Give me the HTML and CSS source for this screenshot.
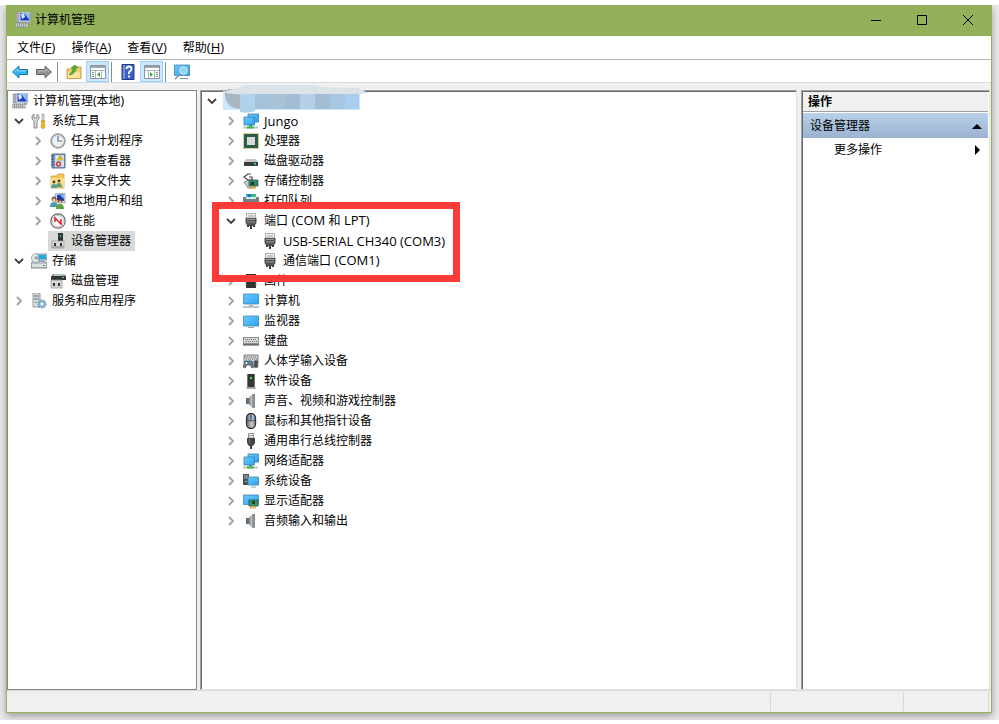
FILE: index.html
```html
<!DOCTYPE html>
<html lang="zh-CN">
<head>
<meta charset="utf-8">
<title>计算机管理</title>
<link rel="stylesheet" href="styles.css">
</head>
<body>
<svg class="sprite" aria-hidden="true">
  <defs>
    <linearGradient id="screen" x1="0" y1="0" x2="1" y2="1"><stop offset="0" stop-color="#6cc8ff"/><stop offset="1" stop-color="#2aa4f6"/></linearGradient>
    <linearGradient id="metal" x1="0" y1="0" x2="1" y2="0"><stop offset="0" stop-color="#666"/><stop offset=".6" stop-color="#c9cdd1"/><stop offset="1" stop-color="#808488"/></linearGradient>
  </defs>
  <symbol id="i-open" viewBox="0 0 10 10"><path d="M1 3l4 4 4-4" fill="none" stroke="#404040" stroke-width="1.8"/></symbol>
  <symbol id="i-closed" viewBox="0 0 10 10"><path d="M3 1l4 4-4 4" fill="none" stroke="#a0a0a0" stroke-width="1.8"/></symbol>
  <symbol id="i-mgmt" viewBox="0 0 16 16"><path d="M1 1h3v9H1z" fill="#aab2b8" stroke="#8b949a" stroke-width=".6"/><path d="M4 0h11.500v10H4z" fill="#d3dae2" stroke="#8f99a3" stroke-width=".6"/><path d="M5.500 1h9v7.500h-9z" fill="#1c3cc4"/><path d="M9 1h5.500v7z" fill="#8fc0ff"/><path d="M6 2l3-1 1 4-3 2z" fill="#dbe9fb"/><path d="M1 11h11l2 4H0z" fill="#c9ced2" stroke="#8a9196" stroke-width=".6"/><path d="M2 12h10M2 14h10" stroke="#666" stroke-dasharray="1 1"/><path d="M12 10h3v2h-3z" fill="#9aa4aa"/></symbol>
  <symbol id="i-tools" viewBox="0 0 16 16"><path d="M3 1L1 3v3l2 2v7h3V8l2-2V3L6 1v4H3z" fill="#d5d9dc" stroke="#747b80" stroke-width=".8"/><path d="M11 1h2v7h-2z" fill="#eee" stroke="#777" stroke-width=".6"/><path d="M10 8h4l-1 2 1 4-2 2-2-2 1-4z" fill="#f8b81b" stroke="#bf7c05" stroke-width=".6"/></symbol>
  <symbol id="i-clock" viewBox="0 0 16 16"><circle cx="8" cy="8" r="7.200" fill="#b5b5b5" stroke="#777" stroke-width=".8"/><circle cx="8" cy="8" r="5.500" fill="#eaf3f8" stroke="#ddd"/><path d="M8 3v5h4" fill="none" stroke="#5575a0" stroke-width="1.200"/><path d="M8 8l3 .5" stroke="#e39d35"/></symbol>
  <symbol id="i-event" viewBox="0 0 16 16"><path d="M2 1h13v14H2z" fill="#7d94bd" stroke="#5a719c"/><path d="M5 2h9v12H5z" fill="#c8daf0"/><path d="M6 4h3M6 6h3M12 11h2" stroke="#fff"/><path d="M1 3h3M1 6h3M1 9h3M1 12h3" stroke="#38507c"/><path d="M10 2l3 5H7z" fill="#ffda27" stroke="#be9200" stroke-width=".5"/><path d="M10 4v2" stroke="#444" stroke-width=".7"/><circle cx="8.500" cy="11" r="2.700" fill="#dd3f36"/><circle cx="8.500" cy="11" r="1" fill="#fff"/></symbol>
  <symbol id="i-share" viewBox="0 0 16 16"><path d="M1 3h6l1-2h6v14H1z" fill="#f4c95a" stroke="#c79a31" stroke-width=".7"/><path d="M1 5h13v9H1z" fill="#fbdf8b"/><circle cx="4" cy="9" r="1.400" fill="#4c4036"/><circle cx="9" cy="8" r="1.400" fill="#4c4036"/><path d="M1 15q0-4 3-4t3 4z" fill="#55a5a2"/><path d="M6 14q0-4 3-4t3 4z" fill="#609b80"/></symbol>
  <symbol id="i-users" viewBox="0 0 16 16"><path d="M5 1l10-1v10l-9-1z" fill="#dce4ed" stroke="#68778c" stroke-width=".6"/><path d="M7 2l7-1v7l-7-1z" fill="#1839bf"/><path d="M10 2l4-1v5z" fill="#83b9fa"/><circle cx="4" cy="6" r="2.500" fill="#8c5d2e"/><circle cx="4" cy="7" r="1.500" fill="#f5c99a"/><path d="M0 14q0-5 4-5t4 5z" fill="#4c99b4"/><circle cx="10" cy="8" r="2.400" fill="#5e3c23"/><circle cx="10" cy="9" r="1.500" fill="#f0bd8c"/><path d="M6 16q0-5 4-5t4 5z" fill="#5aa53d"/></symbol>
  <symbol id="i-perf" viewBox="0 0 16 16"><circle cx="8" cy="8" r="7.200" fill="#fff" stroke="#666" stroke-width="1.200"/><circle cx="8" cy="8" r="5.500" fill="none" stroke="#999" stroke-width=".6"/><path d="M5 9V5l6 6V6" fill="none" stroke="#dc1820" stroke-width="1.500"/></symbol>
  <symbol id="i-device" viewBox="0 0 16 16"><path d="M8 0h5v8H8z" fill="#303532"/><path d="M10 2h1v2h-1z" fill="#39e65b"/><path d="M2 8h12v7H2z" fill="#d7d8da" stroke="#939598" stroke-width=".7"/><path d="M1 13h13v2H1z" fill="#aaa"/><path d="M4 10h2v3H4zM10 10h2v3h-2z" fill="#333"/></symbol>
  <symbol id="i-storage" viewBox="0 0 16 16"><path d="M0 10l3-2h10l3 2v5H0z" fill="#b9bfc4" stroke="#666d72" stroke-width=".7"/><path d="M1 11h14v3H1z" fill="#dce0e2"/><circle cx="5" cy="5" r="4.500" fill="#e5e8e8" stroke="#858d91" stroke-width=".7"/><circle cx="5" cy="5" r="1.400" fill="#929b9f"/><path d="M7 1h9v6H7z" fill="#bfe4f1" stroke="#51707f" stroke-width=".7"/><path d="M8 2h7v4H8z" fill="#28a6dc"/><path d="M12 12h2v1h-2z" fill="#35b34a"/></symbol>
  <symbol id="i-diskmgmt" viewBox="0 0 16 16"><path d="M1 4l2-3h12l1 3v3H1z" fill="#333"/><path d="M2 3l2-2h11l1 2z" fill="#b8bcbe"/><path d="M12 4h2v1h-2z" fill="#4df15e"/><path d="M1 7h11v8H1z" fill="#d4d6d8" stroke="#8c8e90" stroke-width=".7"/><path d="M3 10h2v3H3zM8 10h2v3H8z" fill="#333"/></symbol>
  <symbol id="i-services" viewBox="0 0 16 16"><path d="M2 0h7v14H2z" fill="#d4dce0" stroke="#7e888e" stroke-width=".8"/><path d="M3 3h5M3 6h5" stroke="#65727a"/><path d="M4 9h2v1H4z" fill="#4da86b"/><circle cx="11" cy="11" r="3.300" fill="#a5c6df" stroke="#6490b4"/><circle cx="11" cy="11" r="4.300" fill="none" stroke="#6490b4" stroke-dasharray="1.500 1.500"/><circle cx="11" cy="11" r="1.200" fill="#fff"/></symbol>
  <symbol id="i-network" viewBox="0 0 16 16"><path d="M5 1h10.500v8H5z" fill="url(#screen)" stroke="#3a7ca6" stroke-width=".8"/><path d="M1 4h10.500v8H1z" fill="url(#screen)" stroke="#3a7ca6" stroke-width=".8"/><path d="M6 12h3v2H6z" fill="#3a9b4c"/><path d="M0 14.500h15" stroke="#c1c6c7" stroke-width="2"/><path d="M4 14.500h7" stroke="#3db653" stroke-width="2"/></symbol>
  <symbol id="i-cpu" viewBox="0 0 16 16"><path d="M.5 .5h15v15H.5z" fill="none" stroke="#b09a45" stroke-dasharray="1 1"/><path d="M1 1h14v14H1z" fill="#2b5e45"/><path d="M4 4h8v8H4z" fill="#dadada"/></symbol>
  <symbol id="i-drive" viewBox="0 0 16 16"><path d="M3 6h10l2 3H1z" fill="#c6c8c9"/><path d="M1 9h14v4H1z" fill="#393d3f"/><path d="M11 10h2v1.500h-2z" fill="#50eb66"/></symbol>
  <symbol id="i-controller" viewBox="0 0 16 16"><path d="M8 1H5L1 4l4 3h4V4H6" fill="none" stroke="#444" stroke-width="1.200"/><path d="M1 9l5-2 7 5-2 3H5z" fill="#c4cbcd" stroke="#666" stroke-width=".7"/><path d="M6 7h9v6H6z" fill="#298c66" stroke="#28533e" stroke-width=".7"/><path d="M8 9h3v3H8z" fill="#2e3432"/><path d="M7 14.500h6" stroke="#e0a129" stroke-width="2" stroke-dasharray="2 .5"/></symbol>
  <symbol id="i-printer" viewBox="0 0 16 16"><path d="M3 1h10v5H3z" fill="#32b8bc"/><path d="M5 1h3v3H5z" fill="#2b66d9"/><path d="M9 1h3v3H9z" fill="#42c250"/><path d="M0 4h16v8H0z" fill="#777f84"/><path d="M3 4h10v2H3z" fill="#d3eef2"/><path d="M3 10h10v5H3z" fill="#ddd"/></symbol>
  <symbol id="i-port" viewBox="0 0 16 16"><path d="M3.500 .5h9V5h-9z" fill="#f2f2f2" stroke="#999" stroke-width=".8"/><path d="M6 2v2M8 2v2M10 2v2" stroke="#999"/><path d="M2.500 5h11v5l-2 3h-7l-2-3z" fill="#555"/><path d="M4 6.500h8M4 9h8" stroke="#999"/><path d="M4 12h2v2H4zM10 12h2v2h-2zM7 12h2v4H7z" fill="#3d3d3d"/></symbol>
  <symbol id="i-firmware" viewBox="0 0 16 16"><path d="M3 1h10v14H3z" fill="#343434"/><path d="M2 3h2M2 6h2M2 9h2M2 12h2M12 3h2M12 6h2M12 9h2M12 12h2" stroke="#888"/></symbol>
  <symbol id="i-computer" viewBox="0 0 16 16"><path d="M.5 1h15v10H.5z" fill="url(#screen)" stroke="#4a83a5" stroke-width=".8"/><path d="M6 12h4v1H6z" fill="#9fb5c1"/><path d="M0 14h16" stroke="#93a4ae" stroke-width="1.300"/></symbol>
  <symbol id="i-monitor" viewBox="0 0 16 16"><path d="M.5 3h15v10H.5z" fill="url(#screen)" stroke="#4a83a5" stroke-width=".8"/><path d="M5 14.500h6" stroke="#8caab9"/></symbol>
  <symbol id="i-keyboard" viewBox="0 0 16 16"><path d="M0 4h16v8H0z" fill="#8b8f92"/><path d="M1 5h14v5H1z" fill="#d6d8d9"/><path d="M2 6.500h12M3 8.500h11" stroke="#777" stroke-dasharray="1 1"/><path d="M0 12h16" stroke="#484c4e"/></symbol>
  <symbol id="i-hid" viewBox="0 0 16 16"><path d="M1 2h14v8H1z" fill="#d0d3d4" stroke="#7b8082"/><path d="M2 4h12M3 6h12" stroke="#666" stroke-dasharray="1 1"/><path d="M0 14l2-6h7l2 6-2 1-2-3H4l-2 3z" fill="#71777c" stroke="#4c5257" stroke-width=".7"/><circle cx="3.500" cy="10" r="1" fill="#fff"/><circle cx="7" cy="9.500" r="1.200" fill="#248fdd"/><path d="M11 8q2-2 4 0v6q-2 2-4 0z" fill="#44494d" stroke="#999" stroke-width=".7"/></symbol>
  <symbol id="i-software" viewBox="0 0 16 16"><path d="M4 1h8v13H4z" fill="#343635"/><path d="M4 1h1v13H4zM11 1h1v13h-1z" fill="#737675"/><path d="M7 4h2v2H7z" fill="#43ee4e"/><path d="M3.500 15h9" stroke="#8b8b8b" stroke-width="1.500"/></symbol>
  <symbol id="i-speaker" viewBox="0 0 16 16"><path d="M3 5h3v6H3z" fill="#666b6f"/><path d="M6 5l4-4v14l-4-4z" fill="url(#metal)" stroke="#8e9598" stroke-width=".6"/><path d="M10 1h2v14h-2z" fill="#8a9298"/></symbol>
  <symbol id="i-mouse" viewBox="0 0 16 16"><rect x="3.500" y=".5" width="9" height="15" rx="4.500" fill="url(#metal)" stroke="#30363c" stroke-width="1.300"/><path d="M4 7q4 2 8 0M8 1v7" fill="none" stroke="#30363c" stroke-width=".7"/><rect x="7" y="2" width="2" height="4" rx="1" fill="#377dca"/></symbol>
  <symbol id="i-usb" viewBox="0 0 16 16"><path d="M5.500 .5h5V5h-5z" fill="#eee" stroke="#777" stroke-width=".8"/><path d="M7 2v1M9 2v1" stroke="#555"/><path d="M4 5h8v5l-2 3H6l-2-3z" fill="#454545"/><path d="M6 6h1v4H6z" fill="#777"/><path d="M7 12h2v4H7z" fill="#444"/></symbol>
  <symbol id="i-system" viewBox="0 0 16 16"><path d="M0 1h6v11H0z" fill="#494f52"/><path d="M1 3h4M1 5h4" stroke="#b8bebf"/><path d="M2 8h2v1H2z" fill="#58dc5e"/><path d="M5 4h10.500v8H5z" fill="url(#screen)" stroke="#4a83a5" stroke-width=".8"/><path d="M8 14h5" stroke="#8caab9"/></symbol>
  <symbol id="i-display" viewBox="0 0 16 16"><path d="M.5 2h15v9.500H.5z" fill="url(#screen)" stroke="#4a83a5" stroke-width=".8"/><path d="M6 7h9v6H6z" fill="#3b9868" stroke="#26523c" stroke-width=".8"/><path d="M9 8h3v3H9z" fill="#263d30"/><path d="M7 14.500h6" stroke="#e5a530" stroke-width="2" stroke-dasharray="2 .5"/></symbol>
</svg>

<div class="window">
  <header class="titlebar">
    <svg class="icon"><use href="#i-mgmt"/></svg>
    <h1 class="title">计算机管理</h1>
    <div class="controls">
      <button aria-label="最小化"><svg viewBox="0 0 12 12"><path d="M1 6.500h10"/></svg></button>
      <button aria-label="最大化"><svg viewBox="0 0 12 12"><path d="M1.500 1.500h9v9h-9z"/></svg></button>
      <button aria-label="关闭"><svg viewBox="0 0 12 12"><path d="M1 1l10 10M11 1L1 11"/></svg></button>
    </div>
  </header>

  <nav class="menubar">
    <button>文件<span class="latin">(<u>F</u>)</span></button><button>操作<span class="latin">(<u>A</u>)</span></button><button>查看<span class="latin">(<u>V</u>)</span></button><button>帮助<span class="latin">(<u>H</u>)</span></button>
  </nav>

  <div class="toolbar">
    <button aria-label="后退"><svg class="icon" viewBox="0 0 16 16"><path d="M.5 8L7 2v3.500h8.500v5H7V14z" fill="#32b0ec" stroke="#1679b2"/><path d="M2.500 8L6 5v2h8" fill="none" stroke="#92ddfc"/></svg></button>
    <button aria-label="前进"><svg class="icon" viewBox="0 0 16 16"><path d="M15.500 8L9 2v3.500H.5v5H9V14z" fill="#929292" stroke="#686868"/><path d="M2 7h8V5l3 3" fill="none" stroke="#bbb"/></svg></button>
    <i class="separator"></i>
    <button aria-label="上一级"><svg class="icon" viewBox="0 0 16 16"><path d="M1 5h6l1-2h7v11.500H1z" fill="#f4cf6b" stroke="#bd9139" stroke-width=".8"/><path d="M2 8h12v6H2z" fill="#fbe199"/><path d="M3 10q4-1 4-6H5l4-3 3 3h-2q0 5-6 7z" fill="#49b63a" stroke="#318527" stroke-width=".6"/></svg></button>
    <button class="pressed" aria-label="显示控制台树"><svg class="icon" viewBox="0 0 16 16"><path d="M.5 1.500h15v13H.5z" fill="#fff" stroke="#8d9399"/><path d="M1 3h14" stroke="#9ca5ac" stroke-width="2"/><path d="M1 6.500h14M5.500 6v8M11.500 6v8" stroke="#adb4ba"/><path d="M2 8.500h2M2 10.500h2M2 12.500h2" stroke="#7690a2"/><path d="M10 8v5l-3-2.500z" fill="#32a532"/></svg></button>
    <i class="separator"></i>
    <button aria-label="帮助"><svg class="icon" viewBox="0 0 16 16"><path d="M2 .5h12v15H2z" fill="#3e5fc4" stroke="#223886"/><path d="M3 1h2v14H3z" fill="#7892df"/><path d="M6.500 5q0-2.500 2.500-2.500T11.500 5q0 1.500-1.500 2.200T9 10M9 11.500v2" fill="none" stroke="#fff" stroke-width="1.800"/></svg></button>
    <button class="pressed" aria-label="显示操作窗格"><svg class="icon" viewBox="0 0 16 16"><path d="M.5 1.500h15v13H.5z" fill="#fff" stroke="#8d9399"/><path d="M1 3h14" stroke="#9ca5ac" stroke-width="2"/><path d="M1 6.500h14M4.500 6v8M10.500 6v8" stroke="#adb4ba"/><path d="M12 8.500h2M12 10.500h2M12 12.500h2" stroke="#7690a2"/><path d="M6 8v5l3-2.500z" fill="#32a532"/></svg></button>
    <i class="separator"></i>
    <button aria-label="扫描硬件改动"><svg class="icon" viewBox="0 0 16 16"><path d="M.5 1h15v10.500H.5z" fill="url(#screen)" stroke="#4a83a5" stroke-width=".8"/><path d="M6 14.500h8" stroke="#7893a0"/><circle cx="9.500" cy="6.500" r="3.800" fill="#8fd6fb" stroke="#d8ecf6"/><path d="M6.500 10L1 15" stroke="#8198a5" stroke-width="1.600"/></svg></button>
  </div>

  <main class="panes">
    <nav class="pane tree-pane" aria-label="控制台树">
      <ul class="tree">
        <li><div class="row root"><svg class="icon"><use href="#i-mgmt"/></svg><span>计算机管理(本地)</span></div>
          <ul class="flat">
            <li><div class="row"><button aria-label="折叠"><svg><use href="#i-open"/></svg></button><svg class="icon"><use href="#i-tools"/></svg><span>系统工具</span></div>
              <ul>
                <li><div class="row"><button aria-label="展开"><svg><use href="#i-closed"/></svg></button><svg class="icon"><use href="#i-clock"/></svg><span>任务计划程序</span></div></li>
                <li><div class="row"><button aria-label="展开"><svg><use href="#i-closed"/></svg></button><svg class="icon"><use href="#i-event"/></svg><span>事件查看器</span></div></li>
                <li><div class="row"><button aria-label="展开"><svg><use href="#i-closed"/></svg></button><svg class="icon"><use href="#i-share"/></svg><span>共享文件夹</span></div></li>
                <li><div class="row"><button aria-label="展开"><svg><use href="#i-closed"/></svg></button><svg class="icon"><use href="#i-users"/></svg><span>本地用户和组</span></div></li>
                <li><div class="row"><button aria-label="展开"><svg><use href="#i-closed"/></svg></button><svg class="icon"><use href="#i-perf"/></svg><span>性能</span></div></li>
                <li><div class="row leaf selected"><svg class="icon"><use href="#i-device"/></svg><span>设备管理器</span></div></li>
              </ul>
            </li>
            <li><div class="row"><button aria-label="折叠"><svg><use href="#i-open"/></svg></button><svg class="icon"><use href="#i-storage"/></svg><span>存储</span></div>
              <ul>
                <li><div class="row leaf"><svg class="icon"><use href="#i-diskmgmt"/></svg><span>磁盘管理</span></div></li>
              </ul>
            </li>
            <li><div class="row"><button aria-label="展开"><svg><use href="#i-closed"/></svg></button><svg class="icon"><use href="#i-services"/></svg><span>服务和应用程序</span></div></li>
          </ul>
        </li>
      </ul>
    </nav>

    <section class="pane sunken device-pane" aria-label="设备">
      <ul class="tree">
        <li><div class="row"><button aria-label="折叠"><svg><use href="#i-open"/></svg></button></div>
          <ul>
            <li><div class="row"><button aria-label="展开"><svg><use href="#i-closed"/></svg></button><svg class="icon"><use href="#i-network"/></svg><span class="latin">Jungo</span></div></li>
            <li><div class="row"><button aria-label="展开"><svg><use href="#i-closed"/></svg></button><svg class="icon"><use href="#i-cpu"/></svg><span>处理器</span></div></li>
            <li><div class="row"><button aria-label="展开"><svg><use href="#i-closed"/></svg></button><svg class="icon"><use href="#i-drive"/></svg><span>磁盘驱动器</span></div></li>
            <li><div class="row"><button aria-label="展开"><svg><use href="#i-closed"/></svg></button><svg class="icon"><use href="#i-controller"/></svg><span>存储控制器</span></div></li>
            <li><div class="row"><button aria-label="展开"><svg><use href="#i-closed"/></svg></button><svg class="icon"><use href="#i-printer"/></svg><span>打印队列</span></div></li>
            <li><div class="row"><button aria-label="折叠"><svg><use href="#i-open"/></svg></button><svg class="icon"><use href="#i-port"/></svg><span>端口<b class="latin"> (COM </b>和<b class="latin"> LPT)</b></span></div>
              <ul>
                <li><div class="row leaf"><svg class="icon"><use href="#i-port"/></svg><span class="latin">USB-SERIAL CH340 (COM3)</span></div></li>
                <li><div class="row leaf"><svg class="icon"><use href="#i-port"/></svg><span>通信端口<b class="latin"> (COM1)</b></span></div></li>
              </ul>
            </li>
            <li><div class="row"><button aria-label="展开"><svg><use href="#i-closed"/></svg></button><svg class="icon"><use href="#i-firmware"/></svg><span>固件</span></div></li>
            <li><div class="row"><button aria-label="展开"><svg><use href="#i-closed"/></svg></button><svg class="icon"><use href="#i-computer"/></svg><span>计算机</span></div></li>
            <li><div class="row"><button aria-label="展开"><svg><use href="#i-closed"/></svg></button><svg class="icon"><use href="#i-monitor"/></svg><span>监视器</span></div></li>
            <li><div class="row"><button aria-label="展开"><svg><use href="#i-closed"/></svg></button><svg class="icon"><use href="#i-keyboard"/></svg><span>键盘</span></div></li>
            <li><div class="row"><button aria-label="展开"><svg><use href="#i-closed"/></svg></button><svg class="icon"><use href="#i-hid"/></svg><span>人体学输入设备</span></div></li>
            <li><div class="row"><button aria-label="展开"><svg><use href="#i-closed"/></svg></button><svg class="icon"><use href="#i-software"/></svg><span>软件设备</span></div></li>
            <li><div class="row"><button aria-label="展开"><svg><use href="#i-closed"/></svg></button><svg class="icon"><use href="#i-speaker"/></svg><span>声音、视频和游戏控制器</span></div></li>
            <li><div class="row"><button aria-label="展开"><svg><use href="#i-closed"/></svg></button><svg class="icon"><use href="#i-mouse"/></svg><span>鼠标和其他指针设备</span></div></li>
            <li><div class="row"><button aria-label="展开"><svg><use href="#i-closed"/></svg></button><svg class="icon"><use href="#i-usb"/></svg><span>通用串行总线控制器</span></div></li>
            <li><div class="row"><button aria-label="展开"><svg><use href="#i-closed"/></svg></button><svg class="icon"><use href="#i-network"/></svg><span>网络适配器</span></div></li>
            <li><div class="row"><button aria-label="展开"><svg><use href="#i-closed"/></svg></button><svg class="icon"><use href="#i-system"/></svg><span>系统设备</span></div></li>
            <li><div class="row"><button aria-label="展开"><svg><use href="#i-closed"/></svg></button><svg class="icon"><use href="#i-display"/></svg><span>显示适配器</span></div></li>
            <li><div class="row"><button aria-label="展开"><svg><use href="#i-closed"/></svg></button><svg class="icon"><use href="#i-speaker"/></svg><span>音频输入和输出</span></div></li>
          </ul>
        </li>
      </ul>
      <svg class="redaction" viewBox="0 0 146 28" aria-hidden="true">
        <path d="M0 6h137v19H0z" fill="#cce8ff"/>
        <path d="M2 9q0-5 6-5h128v20H14Q2 22 2 9z" fill="#b4cbe0"/>
        <path d="M2 9q0-4 4-5h11v20Q3 22 2 9z" fill="#a9b6c0"/>
        <path d="M17 6h15v20q-8 3-15 1z" fill="#b0d2ea"/>
        <path d="M32 6h15v18H32z" fill="#a5c1db"/><path d="M47 6h15v18H47z" fill="#aac2d8"/><path d="M62 6h15v18H62z" fill="#a3bdd6"/><path d="M77 6h15v18H77z" fill="#b5d1e8"/><path d="M92 6h15v18H92z" fill="#a5bdd3"/><path d="M107 6h15v18h-15z" fill="#a7c6e1"/><path d="M122 6h14v18h-14z" fill="#a8cdee"/>
        <path d="M3 6Q12 4 22 0h68q6 3 46 3l9 5q-8 1-20 1H26Q12 10 3 8z" fill="#dce3e8"/>
      </svg>
      <div class="highlight"></div>
    </section>

    <aside class="pane sunken actions">
      <h2 class="actions-head">操作</h2>
      <button class="actions-group">设备管理器<svg viewBox="0 0 10 10"><path d="M0 8l5-5 5 5z"/></svg></button>
      <button class="actions-item">更多操作<svg viewBox="0 0 10 10"><path d="M3 0l5 5-5 5z"/></svg></button>
    </aside>
  </main>

  <footer class="statusbar"><span></span><span></span><span></span></footer>
</div>
</body>
</html>
```
FILE: styles.css
```css
* { box-sizing: border-box; }

body {
  margin: 0;
  min-height: 100vh;
  display: flex;
  padding: 5px 7px 11px 6px;
  background: linear-gradient(#fff 5px, transparent 5px, transparent calc(100% - 4px), #fff calc(100% - 4px)), #ebebeb;
  color: #000;
  font: 12px/20px "Noto Sans", "Noto Sans CJK SC", sans-serif;
}

button {
  margin: 0;
  padding: 0;
  border: 0;
  background: none;
  color: inherit;
  font: inherit;
}

.sprite { position: absolute; width: 0; height: 0; }
.icon { flex: none; display: block; width: 16px; height: 16px; }
.latin { font-family: "Open Sans", sans-serif; font-size: 13px; font-weight: 400; line-height: 18px; white-space: pre; }

.window {
  flex: 1;
  min-width: 0;
  display: flex;
  flex-direction: column;
  border: 1px solid #93b05a;
  background: #f0f0f0;
  box-shadow: 0 3px 8px rgba(0, 0, 0, .35);
  clip-path: inset(0 -7px -7px -6px);
}

.titlebar {
  display: flex;
  align-items: center;
  height: 30px;
  padding: 0 0 2px 8px;
  background: #93b05a;
}
.title { margin: 0 0 0 4px; font-size: 12px; font-weight: 400; }
.controls { display: flex; height: 100%; margin-left: auto; }
.controls button { display: grid; place-items: center; width: 46px; }
.controls svg { width: 12px; height: 12px; fill: none; stroke: #000; }

.menubar {
  display: flex;
  height: 24px;
  padding-left: 2px;
  border-bottom: 1px solid #b4b4b4;
  background: #fff;
}
.menubar button { padding: 0 8px; }
.menubar u { text-underline-offset: 1px; }

.toolbar {
  display: flex;
  align-items: flex-end;
  gap: 1px;
  height: 23px;
  padding: 0 1px;
  border-bottom: 1px solid #dadada;
  background: #fff;
}
.toolbar button { display: grid; place-items: center; width: 23px; height: 21px; border: 1px solid transparent; }
.toolbar .pressed { border-color: #99d1ff; background: #cce8ff; }
.separator { width: 1px; height: 20px; margin: 0 3px 0 1px; background: #8c8c8c; }

.panes {
  flex: 1;
  display: grid;
  grid-template-columns: 190px minmax(0, 1fr) 189px;
  gap: 3px;
  padding: 7px 1px 0 0;
}
.pane { position: relative; background: #fff; }
.tree-pane { padding: 0 4px; border: 1px solid #828790; }
.sunken {
  border: 1px solid;
  border-color: #a0a0a0 #e3e3e3 #e3e3e3 #a0a0a0;
  box-shadow: inset 1px 1px #696969;
}

.tree, .tree ul { margin: 0; padding: 0; list-style: none; }
.tree ul { padding-left: 19px; }
.tree .flat { padding-left: 0; }
.row { display: flex; align-items: center; width: max-content; height: 20px; white-space: nowrap; }
.row button { display: grid; place-items: center; width: 14px; height: 20px; margin-right: 5px; }
.row button svg { width: 10px; height: 10px; }
.row span { padding: 0 4px 0 5px; }
.leaf { margin-left: 17px; padding-left: 2px; }
.selected { background: #d9d9d9; }

.device-pane { padding: 0 4px; margin-right: 1px; }
.redaction { position: absolute; left: 22px; top: -6px; width: 146px; height: 28px; }
.highlight {
  position: absolute;
  left: 11px;
  top: 111px;
  width: 248px;
  height: 80px;
  border: 7px solid #fc3a38;
}

.actions { padding: 1px; }
.actions-head {
  height: 20px;
  margin: 0 0 1px;
  padding-left: 5px;
  border-bottom: 1px solid #a0a0a0;
  background: #f0f0f0;
  font-size: 12px;
  font-weight: 700;
}
.actions button { display: flex; align-items: center; justify-content: space-between; width: 100%; height: 25px; }
.actions button svg { width: 10px; height: 10px; }
.actions .actions-group { padding: 0 6px 0 7px; background: linear-gradient(#bad0e9, #9ab3d1); }
.actions .actions-item { height: 23px; padding: 0 6px 0 31px; }

.statusbar {
  display: flex;
  justify-content: flex-end;
  height: 22px;
  padding: 1px 2px 1px 0;
  border-top: 1px solid #d7d7d7;
}
.statusbar span { width: 85px; border-right: 1px solid #d7d7d7; }
.statusbar span:nth-child(2) { width: 133px; }
```
